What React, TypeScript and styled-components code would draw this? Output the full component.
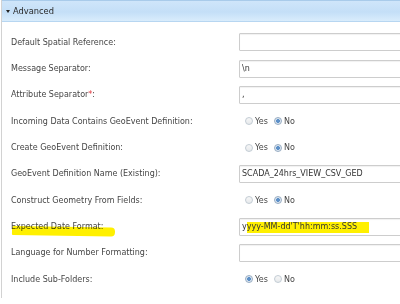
import React from "react";
import styled, { createGlobalStyle, css } from "styled-components";

const GlobalStyle = createGlobalStyle`
  html, body {
    margin: 0;
    padding: 0;
    background: #fff;
    overflow: hidden;
  }
  body {
    width: 400px;
    height: 304px;
    font-family: "DejaVu Sans", Verdana, sans-serif;
  }
`;

const Panel = styled.section`
  width: 399px;
  height: 298px;
  border-left: 1px solid #d2d2d2;
  margin-left: 1px;
  box-sizing: border-box;
  overflow: hidden;
`;

const PanelHeader = styled.header`
  height: 22px;
  box-sizing: border-box;
  border-top: 1px solid #a9cbea;
  border-bottom: 1px solid #b7d6f1;
  background: linear-gradient(#cfe5fa, #c4dff7 55%, #d9ecfc);
  display: flex;
  align-items: center;
  padding-left: 4px;
  gap: 3px;
  font-size: 8.3px;
  color: #2a2a2a;
`;

const Caret = styled.span`
  width: 0;
  height: 0;
  border-left: 2.5px solid transparent;
  border-right: 2.5px solid transparent;
  border-top: 3px solid #222;
  margin-top: 1px;
`;

const Body = styled.div`
  padding-top: 7px;
  display: grid;
  grid-template-columns: 237px 1fr;
  grid-auto-rows: 26.35px;
  align-items: center;
`;

const Label = styled.div`
  padding-left: 9px;
  font-size: 8px;
  color: #454545;
  white-space: nowrap;
`;

const Required = styled.span`
  color: #e0333a;
`;

const Marked = styled.span`
  position: relative;
  &::after {
    content: "";
    position: absolute;
    left: 1px;
    width: 103px;
    top: 4px;
    height: 9px;
    background: #fff000;
    border-radius: 2px 4px 4px 1px;
    transform: rotate(0.9deg);
    transform-origin: left center;
    mix-blend-mode: multiply;
  }
`;

const TextBox = styled.input<{ $marked?: boolean }>`
  box-sizing: border-box;
  width: 200px;
  height: 18px;
  margin: 0;
  padding: 0 0 0 2px;
  border: 1px solid #cdcdcd;
  border-radius: 1px;
  box-shadow: inset 0 1px 1px rgba(0, 0, 0, 0.06);
  font-family: "DejaVu Sans", Verdana, sans-serif;
  font-size: 8px;
  color: #333;
  outline: none;
  background: #fff;
  ${({ $marked }) =>
    $marked &&
    css`
      background: linear-gradient(#fff000, #fff000) no-repeat 7px 3px / 122px 11px,
        #fff;
    `}
`;

const RadioGroup = styled.div`
  display: flex;
  align-items: center;
  padding-left: 6px;
  font-size: 8px;
  color: #454545;
`;

const Option = styled.label`
  display: flex;
  align-items: center;
  gap: 2px;
  margin-right: 6px;
`;

const Dot = styled.span<{ $on?: boolean }>`
  width: 8px;
  height: 8px;
  box-sizing: border-box;
  border-radius: 50%;
  border: 1px solid ${({ $on }) => ($on ? "#97acc2" : "#c3ccd4")};
  background: ${({ $on }) =>
    $on
      ? "radial-gradient(circle, #5d90c8 0 1.7px, #dde7f1 2.2px)"
      : "linear-gradient(#f7f7f7, #e6e9ec)"};
`;

type Row =
  | { label: React.ReactNode; kind: "text"; value?: string; marked?: boolean }
  | { label: React.ReactNode; kind: "radio"; yes: boolean };

const rows: Row[] = [
  { label: "Default Spatial Reference:", kind: "text", value: "" },
  { label: "Message Separator:", kind: "text", value: "\\n" },
  {
    label: (
      <>
        Attribute Separator<Required>*</Required>:
      </>
    ),
    kind: "text",
    value: ",",
  },
  { label: "Incoming Data Contains GeoEvent Definition:", kind: "radio", yes: false },
  { label: "Create GeoEvent Definition:", kind: "radio", yes: false },
  { label: "GeoEvent Definition Name (Existing):", kind: "text", value: "SCADA_24hrs_VIEW_CSV_GED" },
  { label: "Construct Geometry From Fields:", kind: "radio", yes: false },
  {
    label: <Marked>Expected Date Format:</Marked>,
    kind: "text",
    value: "yyyy-MM-dd'T'hh:mm:ss.SSS",
    marked: true,
  },
  { label: "Language for Number Formatting:", kind: "text", value: "" },
  { label: "Include Sub-Folders:", kind: "radio", yes: true },
];

const YesNo = ({ yes }: { yes: boolean }) => (
  <RadioGroup>
    <Option>
      <Dot $on={yes} />
      Yes
    </Option>
    <Option>
      <Dot $on={!yes} />
      No
    </Option>
  </RadioGroup>
);

const App = () => {
  return (
    <>
      <GlobalStyle />
      <Panel>
        <PanelHeader>
          <Caret />
          Advanced
        </PanelHeader>
        <Body>
          {rows.map((row, i) => (
            <React.Fragment key={i}>
              <Label>{row.label}</Label>
              {row.kind === "text" ? (
                <TextBox defaultValue={row.value} $marked={row.marked} />
              ) : (
                <YesNo yes={row.yes} />
              )}
            </React.Fragment>
          ))}
        </Body>
      </Panel>
    </>
  );
};

export default App;
